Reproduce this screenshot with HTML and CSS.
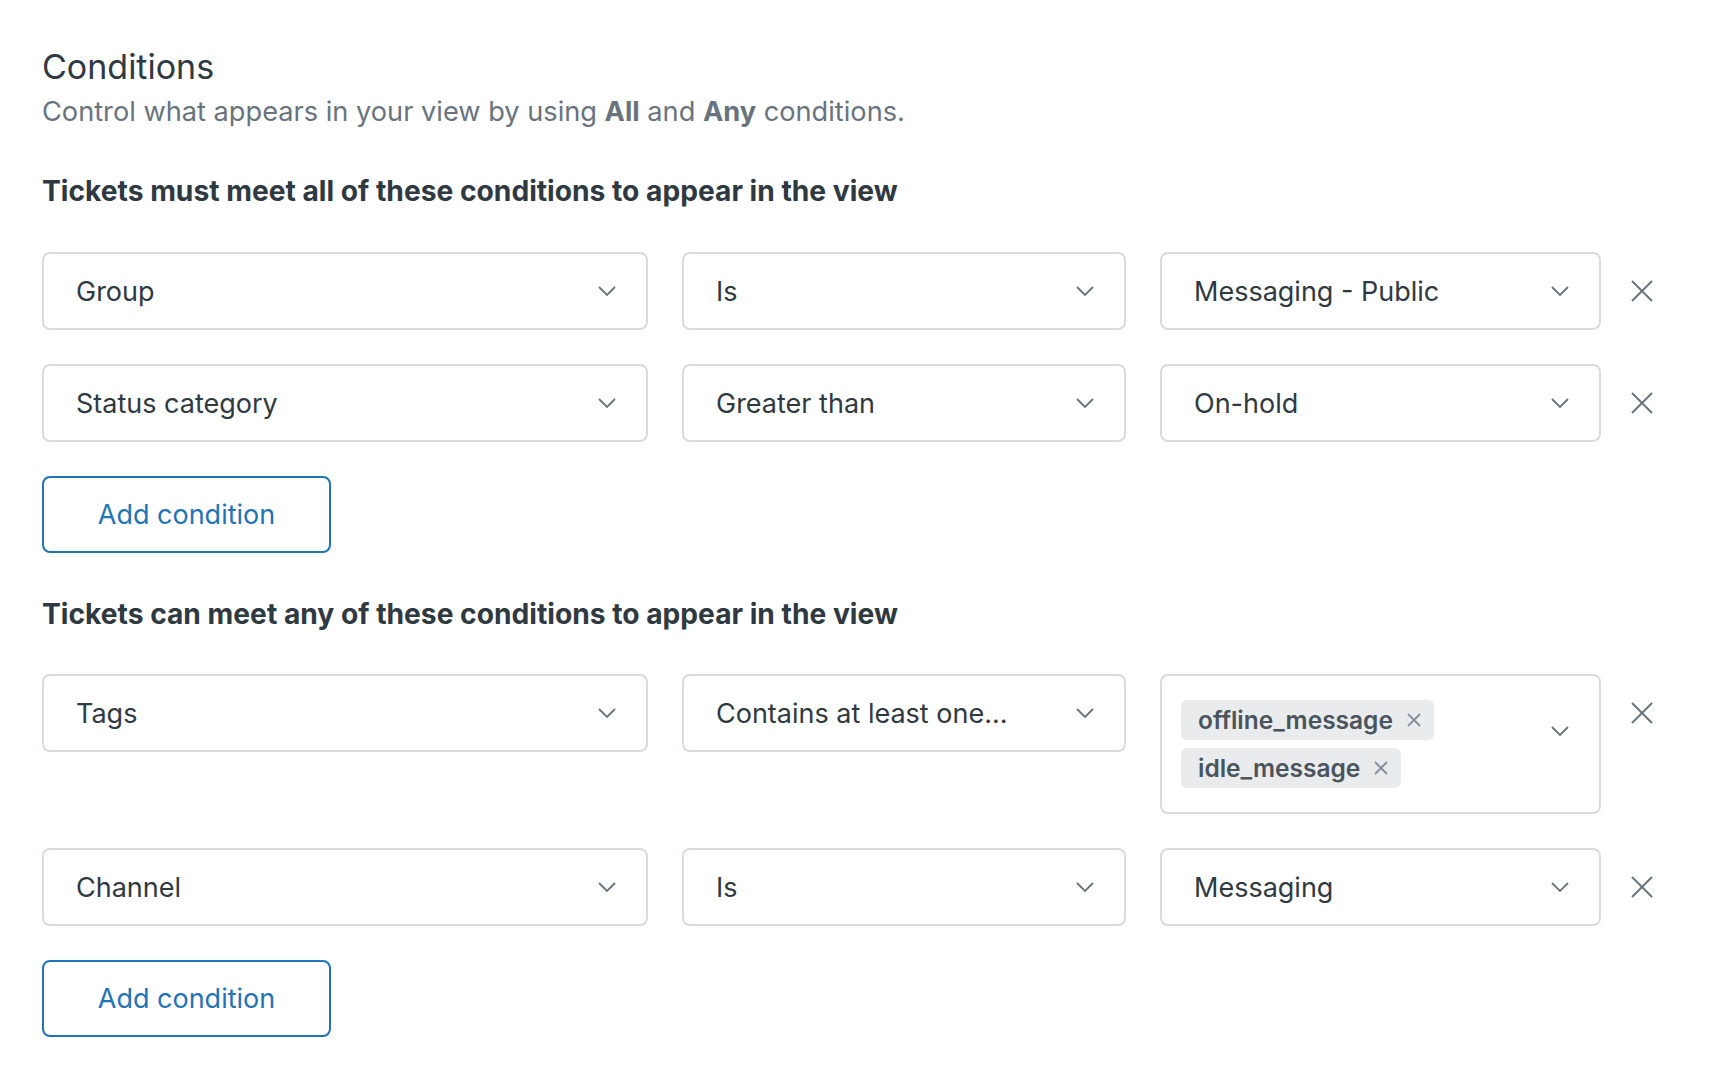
FILE: index.html
```html
<!DOCTYPE html>
<html lang="en">
<head>
<meta charset="utf-8">
<title>Conditions</title>
<link rel="stylesheet" href="styles.css">
</head>
<body>
<main class="page">
  <h1 class="title">Conditions</h1>
  <p class="subtitle">Control what appears in your view by using <strong>All</strong> and <strong>Any</strong> conditions.</p>

  <h2 class="section-heading first">Tickets must meet all of these conditions to appear in the view</h2>
  <div class="rows">
    <div class="row">
      <div class="fields">
        <div class="select col-field"><span class="value">Group</span><svg class="chevron" viewBox="0 0 18 10"><polyline points="1,1 9,9 17,1"/></svg></div>
        <div class="select col-op"><span class="value">Is</span><svg class="chevron" viewBox="0 0 18 10"><polyline points="1,1 9,9 17,1"/></svg></div>
        <div class="select col-val"><span class="value">Messaging - Public</span><svg class="chevron" viewBox="0 0 18 10"><polyline points="1,1 9,9 17,1"/></svg></div>
      </div>
      <div class="remove"><svg class="x" viewBox="0 0 22 22"><line x1="1" y1="1" x2="21" y2="21"/><line x1="21" y1="1" x2="1" y2="21"/></svg></div>
    </div>
    <div class="row">
      <div class="fields">
        <div class="select col-field"><span class="value">Status category</span><svg class="chevron" viewBox="0 0 18 10"><polyline points="1,1 9,9 17,1"/></svg></div>
        <div class="select col-op"><span class="value">Greater than</span><svg class="chevron" viewBox="0 0 18 10"><polyline points="1,1 9,9 17,1"/></svg></div>
        <div class="select col-val"><span class="value">On-hold</span><svg class="chevron" viewBox="0 0 18 10"><polyline points="1,1 9,9 17,1"/></svg></div>
      </div>
      <div class="remove"><svg class="x" viewBox="0 0 22 22"><line x1="1" y1="1" x2="21" y2="21"/><line x1="21" y1="1" x2="1" y2="21"/></svg></div>
    </div>
  </div>
  <button class="add-btn" type="button">Add condition</button>

  <h2 class="section-heading second">Tickets can meet any of these conditions to appear in the view</h2>
  <div class="rows">
    <div class="row">
      <div class="fields">
        <div class="select col-field"><span class="value">Tags</span><svg class="chevron" viewBox="0 0 18 10"><polyline points="1,1 9,9 17,1"/></svg></div>
        <div class="select col-op"><span class="value">Contains at least one...</span><svg class="chevron" viewBox="0 0 18 10"><polyline points="1,1 9,9 17,1"/></svg></div>
        <div class="select col-val multi">
          <div class="tags">
            <span class="tag">offline_message<svg class="tag-x" viewBox="0 0 14 14"><line x1="1" y1="1" x2="13" y2="13"/><line x1="13" y1="1" x2="1" y2="13"/></svg></span>
            <span class="tag">idle_message<svg class="tag-x" viewBox="0 0 14 14"><line x1="1" y1="1" x2="13" y2="13"/><line x1="13" y1="1" x2="1" y2="13"/></svg></span>
          </div>
          <svg class="chevron" viewBox="0 0 18 10"><polyline points="1,1 9,9 17,1"/></svg>
        </div>
      </div>
      <div class="remove"><svg class="x" viewBox="0 0 22 22"><line x1="1" y1="1" x2="21" y2="21"/><line x1="21" y1="1" x2="1" y2="21"/></svg></div>
    </div>
    <div class="row">
      <div class="fields">
        <div class="select col-field"><span class="value">Channel</span><svg class="chevron" viewBox="0 0 18 10"><polyline points="1,1 9,9 17,1"/></svg></div>
        <div class="select col-op"><span class="value">Is</span><svg class="chevron" viewBox="0 0 18 10"><polyline points="1,1 9,9 17,1"/></svg></div>
        <div class="select col-val"><span class="value">Messaging</span><svg class="chevron" viewBox="0 0 18 10"><polyline points="1,1 9,9 17,1"/></svg></div>
      </div>
      <div class="remove"><svg class="x" viewBox="0 0 22 22"><line x1="1" y1="1" x2="21" y2="21"/><line x1="21" y1="1" x2="1" y2="21"/></svg></div>
    </div>
  </div>
  <button class="add-btn" type="button">Add condition</button>
</main>
</body>
</html>
```
FILE: styles.css
```css
* { box-sizing: border-box; }
html, body { margin: 0; padding: 0; background: #ffffff; }
body {
  font-family: Inter, "Noto Sans", "Liberation Sans", sans-serif;
  color: #2f3941;
}
.page {
  padding: 45px 0 40px 42px;
}
.title {
  margin: 0;
  font-size: 34px;
  line-height: 44px;
  font-weight: 400;
  color: #2f3941;
}
.subtitle {
  margin: 5px 0 0;
  font-size: 27.2px;
  line-height: 36px;
  color: #68737d;
}
.subtitle strong { font-weight: 700; color: #68737d; }
.section-heading {
  margin: 43px 0 43px;
  font-size: 28.2px;
  line-height: 36px;
  font-weight: 700;
  color: #2f3941;
}
.section-heading.second { margin: 43px 0 42px; }
.rows {
  display: flex;
  flex-direction: column;
  gap: 34px;
}
.row {
  display: flex;
  align-items: flex-start;
}
.fields {
  display: flex;
  gap: 34px;
  align-items: flex-start;
}
.select {
  height: 78px;
  border: 2px solid #d8dcde;
  border-radius: 8px;
  display: flex;
  align-items: center;
  justify-content: space-between;
  padding: 0 30px 0 32px;
  font-size: 27px;
  color: #2f3941;
  background: #fff;
}
.col-field { width: 606px; }
.col-op { width: 444px; }
.col-val { width: 441px; }
.value { white-space: nowrap; }
.chevron {
  width: 18px;
  height: 10px;
  flex: none;
  fill: none;
  stroke: #68737d;
  stroke-width: 1.8;
}
.select.multi {
  height: 140px;
  align-items: flex-start;
  padding: 24px 30px 24px 19px;
}
.select.multi .chevron { margin-top: 26px; }
.tags {
  display: flex;
  flex-direction: column;
  align-items: flex-start;
  gap: 8px;
}
.tag {
  height: 40px;
  display: inline-flex;
  align-items: center;
  padding: 0 13px 0 17px;
  background: #e9ebed;
  border-radius: 6px;
  font-size: 24.5px;
  font-weight: 600;
  color: #49545c;
}
.tag-x {
  width: 14px;
  height: 14px;
  margin-left: 14px;
  fill: none;
  stroke: #87929d;
  stroke-width: 2;
}
.remove {
  width: 82px;
  height: 78px;
  display: flex;
  align-items: center;
  justify-content: center;
}
.x {
  width: 22px;
  height: 22px;
  fill: none;
  stroke: #68737d;
  stroke-width: 2;
}
.add-btn {
  display: block;
  margin-top: 34px;
  width: 289px;
  height: 77px;
  border: 2px solid #1f73b7;
  border-radius: 8px;
  background: #fff;
  color: #1f73b7;
  font-family: inherit;
  font-size: 27px;
  padding: 0;
}
```
